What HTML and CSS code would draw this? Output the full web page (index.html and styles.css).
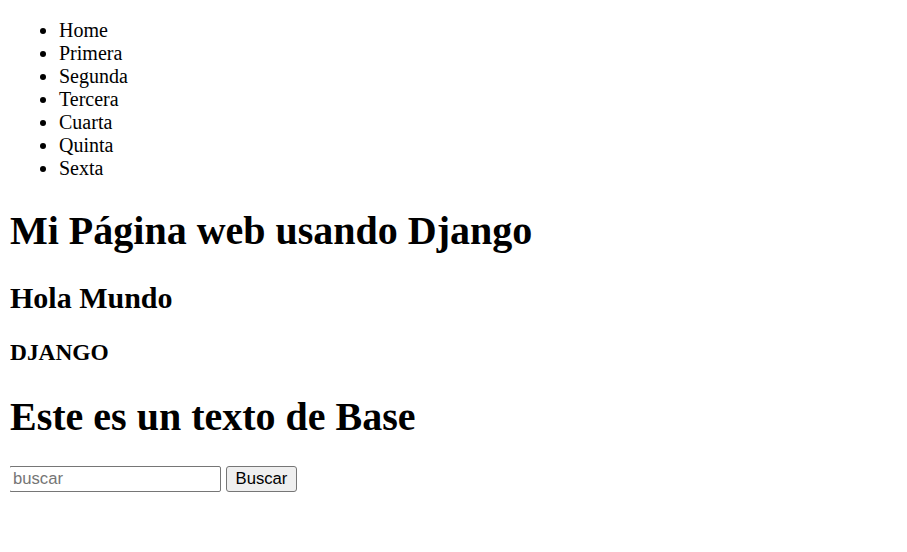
FILE: index.html
```html
<!DOCTYPE html>
<html lang="es">
<head>
<meta charset="utf-8">
<title>Mi Página web usando Django</title>
<link rel="stylesheet" href="styles.css">
</head>
<body class="page">
<ul class="nav">
<li>Home</li>
<li>Primera</li>
<li>Segunda</li>
<li>Tercera</li>
<li>Cuarta</li>
<li>Quinta</li>
<li>Sexta</li>
</ul>
<h1 class="title">Mi Página web usando Django</h1>
<h2 class="subtitle">Hola Mundo</h2>
<h3 class="label">DJANGO</h3>
<h1 class="title">Este es un texto de Base</h1>
<form class="search">
<input class="search-input" type="text" placeholder="buscar">
<button class="search-btn" type="button">Buscar</button>
</form>
</body>
</html>
```
FILE: styles.css
```css
html, body { background: #fff; }
.page {
  margin: 0 10px;
  padding: 19px 0 10px;
  font-family: "Liberation Serif", "Times New Roman", serif;
  font-size: 20px;
  color: #000;
}
.nav {
  margin: 0 0 20px;
  padding-left: 49px;
  list-style: disc;
  font-size: 20px;
}
.title {
  font-size: 40px;
  font-weight: bold;
  margin: 26.8px 0;
}
.subtitle {
  font-size: 30px;
  font-weight: bold;
  margin: 24.9px 0;
}
.label {
  font-size: 23.4px;
  font-weight: bold;
  margin: 23.4px 0;
}
.search {
  display: flex;
  gap: 5px;
  margin: -1px 0 0 -1px;
}
.search-input {
  box-sizing: border-box;
  width: 212px;
  height: 26px;
  margin: 0;
  padding: 1px 3px;
  border: 1px solid #767676;
  border-radius: 2px;
  font-family: "Liberation Sans", Arial, sans-serif;
  font-size: 16.67px;
  color: #000;
  background: #fff;
}
.search-input::placeholder { color: #757575; }
.search-btn {
  box-sizing: border-box;
  width: 71px;
  height: 26px;
  margin: 0;
  padding: 1px 7px;
  border: 1px solid #767676;
  border-radius: 3px;
  background: #efefef;
  font-family: "Liberation Sans", Arial, sans-serif;
  font-size: 16.67px;
  color: #000;
}
```
